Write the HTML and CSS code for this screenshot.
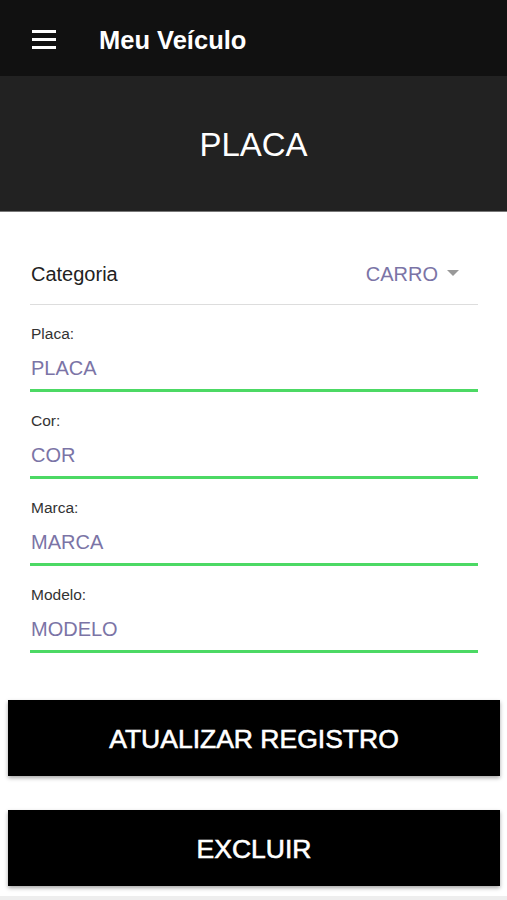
FILE: index.html
```html
<!DOCTYPE html>
<html lang="pt">
<head>
    <meta charset="UTF-8">
    <meta name="viewport" content="width=device-width, initial-scale=1.0">
    <title>Meu Veículo</title>
    <link rel="stylesheet" href="styles.css">
</head>
<body>
    <header class="toolbar">
        <div class="menu-icon">
            <span></span><span></span><span></span>
        </div>
        <h1 class="title">Meu Veículo</h1>
    </header>

    <div class="banner">PLACA</div>

    <form class="form">
        <div class="select-row">
            <span class="select-label">Categoria</span>
            <span class="select-value">CARRO <i class="caret"></i></span>
        </div>

        <div class="field">
            <label>Placa:</label>
            <div class="value">PLACA</div>
        </div>
        <div class="field">
            <label>Cor:</label>
            <div class="value">COR</div>
        </div>
        <div class="field">
            <label>Marca:</label>
            <div class="value">MARCA</div>
        </div>
        <div class="field">
            <label>Modelo:</label>
            <div class="value">MODELO</div>
        </div>
    </form>

    <div class="actions">
        <button type="button" class="btn">ATUALIZAR REGISTRO</button>
        <button type="button" class="btn">EXCLUIR</button>
    </div>
    <div class="bottom-bar"></div>
</body>
</html>
```

FILE: styles.css
```css
body {
    margin: 0;
    font-family: "Liberation Sans", Arial, sans-serif;
    background: #fff;
    color: #222;
}
.toolbar {
    height: 76px;
    background: #111;
    display: flex;
    align-items: center;
    padding-left: 32px;
}
.menu-icon {
    width: 24px;
    display: flex;
    flex-direction: column;
    gap: 5px;
    margin-top: 2px;
}
.menu-icon span {
    display: block;
    height: 3px;
    background: #fff;
}
.title {
    margin: 4px 0 0 43px;
    font-size: 25.5px;
    font-weight: bold;
    color: #fff;
}
.banner {
    height: 136px;
    background: #222;
    color: #fff;
    font-size: 33px;
    display: flex;
    align-items: center;
    justify-content: center;
    padding-top: 3px;
    border-bottom: 1px solid #777;
    box-sizing: border-box;
}
.form {
    padding: 0 29px 0 30px;
}
.select-row {
    display: flex;
    justify-content: space-between;
    align-items: center;
    height: 40px;
    margin-top: 42px;
    padding: 0 19px 10px 1px;
    border-bottom: 1px solid #ddd;
    font-size: 20px;
}
.select-value {
    color: #7b74a6;
    display: flex;
    align-items: center;
}
.caret {
    width: 0;
    height: 0;
    margin-left: 9px;
    margin-top: -3px;
    border-left: 6px solid transparent;
    border-right: 6px solid transparent;
    border-top: 6px solid #999;
}
.field {
    padding: 20px 0 9px 1px;
    border-bottom: 3px solid #4cd964;
}
.field label {
    display: block;
    font-size: 15.5px;
    line-height: 18px;
    color: #333;
}
.value {
    margin-top: 13px;
    font-size: 20px;
    line-height: 24px;
    color: #7b74a6;
}
.actions {
    margin-top: 47px;
    padding: 0 7px 0 8px;
    display: flex;
    flex-direction: column;
    gap: 34px;
}
.btn {
    height: 76px;
    background: #000;
    color: #fff;
    border: none;
    font-family: "Liberation Sans", Arial, sans-serif;
    font-size: 26.5px;
    font-weight: normal;
    -webkit-text-stroke: 0.6px #fff;
    padding-top: 3px;
    box-shadow: 0 2px 4px rgba(0,0,0,0.35);
}
.bottom-bar {
    margin-top: 10px;
    height: 4px;
    background: #eee;
}
```
